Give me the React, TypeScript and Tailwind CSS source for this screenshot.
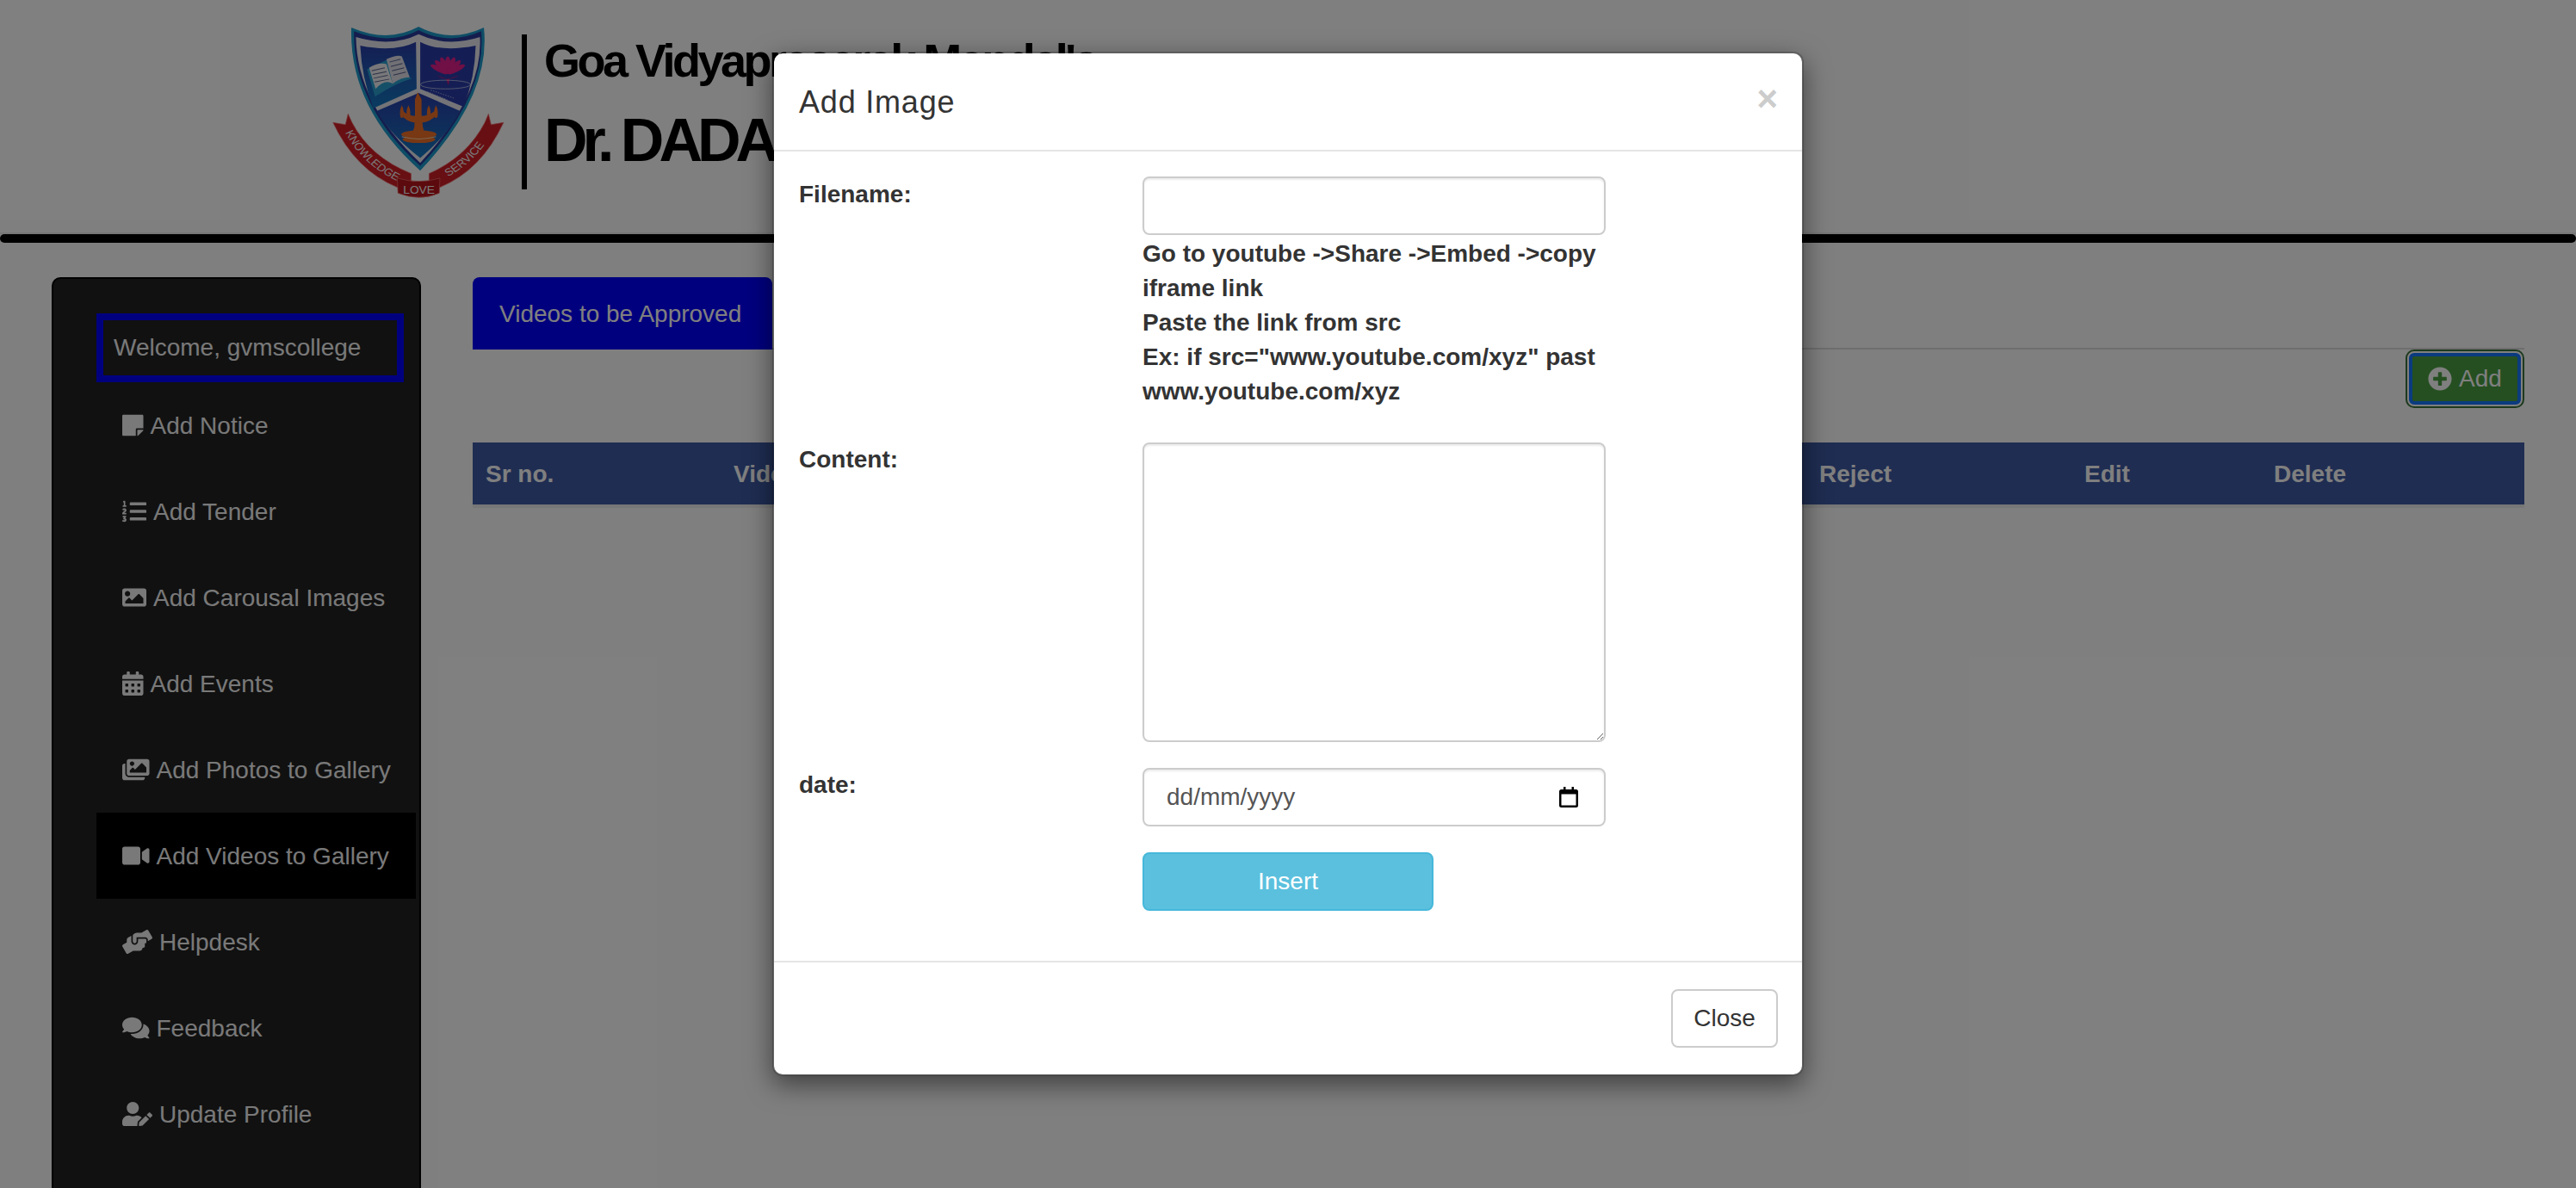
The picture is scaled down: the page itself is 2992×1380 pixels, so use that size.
import React from "react";
import {
  FaStickyNote,
  FaListOl,
  FaImage,
  FaCalendarAlt,
  FaImages,
  FaVideo,
  FaHandsHelping,
  FaComments,
  FaUserEdit,
  FaPowerOff,
  FaPlusCircle,
} from "react-icons/fa";

const menu = [
  { label: "Add Notice", icon: FaStickyNote, iconClass: "w-[24.5px]" },
  { label: "Add Tender", icon: FaListOl, iconClass: "w-[28px]" },
  { label: "Add Carousal Images", icon: FaImage, iconClass: "w-[28px]" },
  { label: "Add Events", icon: FaCalendarAlt, iconClass: "w-[24.5px]" },
  { label: "Add Photos to Gallery", icon: FaImages, iconClass: "w-[31.5px]" },
  { label: "Add Videos to Gallery", icon: FaVideo, iconClass: "w-[31.5px]", active: true },
  { label: "Helpdesk", icon: FaHandsHelping, iconClass: "w-[35px]" },
  { label: "Feedback", icon: FaComments, iconClass: "w-[31.5px]" },
  { label: "Update Profile", icon: FaUserEdit, iconClass: "w-[35px]" },
  { label: "Logout", icon: FaPowerOff, iconClass: "w-[28px]" },
];

const columns = ["Sr no.", "Video", "Content", "Date", "Approve", "Reject", "Edit", "Delete"];

const petals = [-60, -40, -20, 0, 20, 40, 60];
const flames = [332, 352, 414, 436];

function Crest() {
  return (
    <svg width="200" height="200" viewBox="120 92 525 598" preserveAspectRatio="none" className="shrink-0">
      <defs>
        <linearGradient id="panel" x1="0" y1="0" x2="0" y2="1">
          <stop offset="0" stopColor="#2a3ca8" />
          <stop offset="1" stopColor="#1478c0" />
        </linearGradient>
        <path id="ribbonL" d="M150,440 Q205,570 325,632" />
        <path id="ribbonR" d="M425,640 Q560,575 620,435" />
      </defs>
      {/* shield */}
      <path d="M178,95 Q290,150 383,92 Q480,150 582,95 Q605,330 388,592 Q170,370 178,95Z" fill="#1c9ccc" />
      <path d="M186,108 Q295,158 383,104 Q475,158 574,108 Q592,330 388,576 Q182,365 186,108Z" fill="#2a3a9c" />
      <path d="M192,128 Q300,165 383,118 Q470,165 570,128 Q580,330 388,565 Q195,360 192,128Z" fill="#e8e8f0" />
      <path d="M205,158 Q310,182 375,145 L377,308 L245,375 Q210,270 205,158Z" fill="url(#panel)" />
      <path d="M388,145 Q450,182 557,158 Q555,270 520,370 L388,308Z" fill="#2a3ca8" />
      <path d="M383,322 L510,385 Q470,470 388,548 Q300,470 255,385Z" fill="url(#panel)" />
      {/* book */}
      <path d="M226,240 L250,335 Q310,290 362,272 L345,262 L300,200Z" fill="#2aa0d0" />
      <path d="M232,235 Q260,215 285,222 L304,290 Q280,272 252,308Z" fill="#f0f0f4" />
      <path d="M285,205 Q318,188 332,195 L356,268 Q330,268 304,290Z" fill="#e0e0ea" />
      <path d="M240,245 L280,235 M243,258 L285,248 M246,271 L289,261 M249,284 L294,274 M294,215 L328,205 M298,230 L334,220 M302,245 L339,235 M306,260 L344,250" stroke="#5a6490" strokeWidth="3" />
      {/* lotus */}
      {petals.map((a) => (
        <ellipse key={a} cx="472" cy="225" rx="9" ry="30" fill="#e0208c" transform={`rotate(${a} 472 255)`} />
      ))}
      <path d="M440,262 Q472,285 505,262 L478,272 L474,295 L466,272Z" fill="#c81878" />
      <ellipse cx="465" cy="293" rx="76" ry="15" fill="none" stroke="#d0d8f0" strokeWidth="2" />
      <path d="M410,318 L470,345 M420,312 L490,340" stroke="#d0d8f0" strokeWidth="2" strokeDasharray="4 4" />
      {/* lamp */}
      <path d="M380,320 L392,345 L392,395 L396,440 L400,455 L366,455 L370,440 L372,395 L372,345Z" fill="#f07028" />
      <path d="M328,395 Q350,430 383,425 Q415,430 440,395 L432,385 Q410,405 383,402 Q355,405 335,385Z" fill="#f07028" />
      {flames.map((x) => (
        <path key={x} d={`M${x},365 Q${x + 9},385 ${x + 4},408 L${x - 4},408 Q${x - 9},385 ${x},365Z`} fill="#f07028" />
      ))}
      <ellipse cx="384" cy="466" rx="54" ry="14" fill="#f07028" />
      <ellipse cx="384" cy="484" rx="50" ry="12" fill="#f07028" />
      <path d="M332,474 Q384,490 436,474" stroke="#f8d0a0" strokeWidth="3" fill="none" />
      {/* ribbon */}
      <path d="M122,425 L160,432 L168,395 L180,425 Q235,545 360,602 L360,630 L318,650 Q190,590 122,425Z" fill="#d01e26" stroke="#f07070" strokeWidth="2" />
      <path d="M642,425 L604,432 L596,395 L585,425 Q530,545 415,602 L415,630 L448,650 Q575,590 642,425Z" fill="#d01e26" stroke="#f07070" strokeWidth="2" />
      <path d="M318,618 Q385,640 448,618 L446,670 Q385,700 320,670Z" fill="#b8141c" stroke="#f07070" strokeWidth="2" />
      <text fontFamily="Liberation Sans, sans-serif" fontSize="36" fill="#f4f4f4">
        <textPath href="#ribbonL" startOffset="22">KNOWLEDGE</textPath>
      </text>
      <text fontFamily="Liberation Sans, sans-serif" fontSize="36" fill="#f4f4f4">
        <textPath href="#ribbonR" startOffset="55">SERVICE</textPath>
      </text>
      <text x="384" y="672" textAnchor="middle" fontFamily="Liberation Sans, sans-serif" fontSize="36" fill="#f4f4f4">
        LOVE
      </text>
    </svg>
  );
}

function Sidebar() {
  return (
    <aside className="w-[429px] h-[1100px] shrink-0 ml-[60px] rounded-[10px] border-2 border-black bg-[#222222] pt-[40px] pl-[50px] text-[#f2f2f2]">
      <div className="w-[357px] h-[80px] border-[8px] border-[#0000ff] flex items-center pl-[12px] text-[28px]">
        Welcome, gvmscollege
      </div>
      {menu.map((item) => {
        const Icon = item.icon;
        return (
          <div
            key={item.label}
            className={`w-[371px] h-[100px] flex items-center pl-[30px] gap-[8px] text-[28px] ${item.active ? "bg-black" : ""}`}
          >
            <Icon className={`shrink-0 h-[28px] ${item.iconClass}`} />
            <span className="pt-[2px]">{item.label}</span>
          </div>
        );
      })}
    </aside>
  );
}

function Content() {
  return (
    <main className="ml-[60px] w-[2383px]">
      <div className="border-b-2 border-[#dddddd] h-[84px]">
        <div className="w-[348px] h-[84px] rounded-t-[8px] bg-[#0000ff] text-white text-[28px] flex items-center pl-[31px] pt-[2px]">
          Videos to be Approved
        </div>
      </div>
      <div className="flex justify-end">
        <div className="w-[138px] h-[68px] rounded-[10px] border-2 border-[#3c743c] p-[2px]">
          <div className="w-full h-full rounded-[6px] border-[4px] border-[#1676fe] bg-[#4a9e42] text-white text-[28px] flex items-center justify-center gap-[8px]">
            <FaPlusCircle size={28} />
            <span>Add</span>
          </div>
        </div>
      </div>
      <div className="mt-[40px] h-[76px] border-b-4 border-[#eeeeee] bg-[#3e5aa4] text-white text-[28px] font-bold grid grid-cols-[288px_300px_300px_340px_321px_308px_220px_1fr] items-center">
        {columns.map((c) => (
          <div key={c} className="pl-[15px] pt-[2px]">
            {c}
          </div>
        ))}
      </div>
    </main>
  );
}

function Modal() {
  const inputClass =
    "block w-[538px] border-2 border-[#cccccc] rounded-[8px] bg-white shadow-[inset_0_2px_2px_rgba(0,0,0,0.075)]";
  return (
    <div className="absolute inset-0 bg-black/50 flex justify-center items-start pt-[60px]">
      <div className="w-[1198px] h-[1190px] bg-white bg-clip-padding border-2 border-[#00000033] rounded-[12px] shadow-[0_10px_30px_rgba(0,0,0,0.5)] text-[#333333] text-[28px]">
        <div className="h-[114px] border-b-2 border-[#e5e5e5] flex items-center justify-between pl-[29px] pr-[28px]">
          <h4 className="text-[36px] leading-[50px] tracking-[0.8px] pt-[2px]">Add Image</h4>
          <span className="text-[42px] font-bold text-[#cccccc] leading-none -mt-[6px]">×</span>
        </div>
        <div className="pl-[29px] pt-[29px] h-[942px] border-b-2 border-[#e5e5e5] grid grid-cols-[399px_538px] content-start">
          <label className="font-bold leading-[40px] pt-[1px]">Filename:</label>
          <div>
            <input type="text" className={`${inputClass} h-[68px]`} />
            <div className="font-bold leading-[40px] pt-[2px]">
              Go to youtube -&gt;Share -&gt;Embed -&gt;copy iframe link
              <br />
              Paste the link from src
              <br />
              Ex: if src="www.youtube.com/xyz" past www.youtube.com/xyz
            </div>
          </div>
          <label className="font-bold leading-[40px] mt-[39px]">Content:</label>
          <textarea className={`${inputClass} h-[348px] mt-[39px] resize`} />
          <label className="font-bold leading-[40px] mt-[30px]">date:</label>
          <div className={`${inputClass} h-[68px] mt-[30px] flex items-center justify-between pl-[26px] pr-[30px] text-[#555555]`}>
            <span>dd/mm/yyyy</span>
            <svg width="22" height="24" viewBox="0 0 22 24" fill="none">
              <path d="M5 0h2.5v3h7V0H17v3h2.5A2.5 2.5 0 0 1 22 5.5v16a2.5 2.5 0 0 1-2.5 2.5h-17A2.5 2.5 0 0 1 0 21.5v-16A2.5 2.5 0 0 1 2.5 3H5Z" fill="#000" />
              <rect x="2.5" y="8.5" width="17" height="13" fill="#fff" />
            </svg>
          </div>
          <div className="col-start-2 mt-[30px]">
            <button className="w-[338px] h-[68px] rounded-[8px] border-2 border-[#46b8da] bg-[#5bc0de] text-white">
              Insert
            </button>
          </div>
        </div>
        <div className="flex justify-end pt-[31px] pr-[28px]">
          <button className="w-[124px] h-[68px] rounded-[8px] border-2 border-[#cccccc] bg-white">Close</button>
        </div>
      </div>
    </div>
  );
}

export default function App() {
  return (
    <div className="relative h-[1380px] overflow-hidden bg-white font-['Liberation_Sans',Arial,sans-serif]">
      <header className="h-[272px] border-b-2 border-[#eeeeee] pl-[386px] pt-[31px] flex items-start text-black">
        <Crest />
        <div className="w-[6px] h-[180px] bg-black ml-[20px] mt-[9px] shrink-0" />
        <div className="ml-[20px] font-bold whitespace-nowrap">
          <div className="text-[54px] leading-[60px] tracking-[-3.5px] mt-[9px]">Goa Vidyaprasarak Mandal's</div>
          <div className="text-[70px] leading-[80px] tracking-[-6px] mt-[23px]">Dr. DADA VAIDYA COLLEGE</div>
        </div>
      </header>
      <div className="h-[10px] rounded-full bg-black" />
      <div className="flex pt-[40px]">
        <Sidebar />
        <Content />
      </div>
      <Modal />
    </div>
  );
}
